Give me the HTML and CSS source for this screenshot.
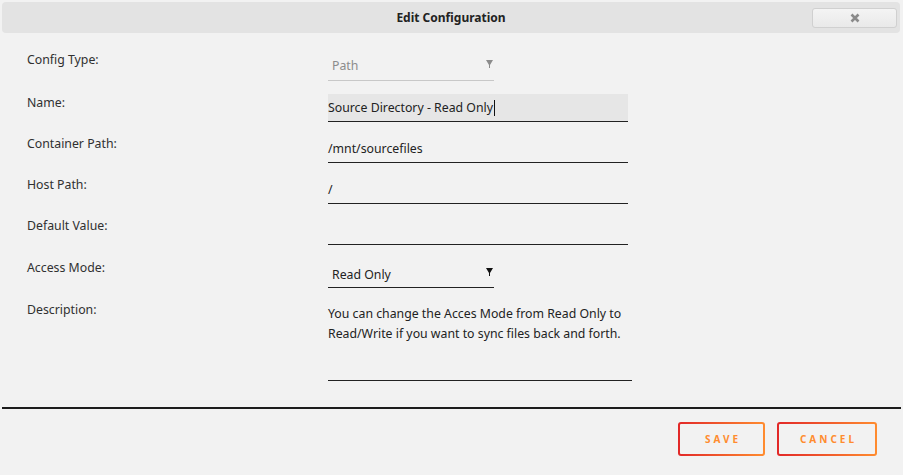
FILE: index.html
```html
<!DOCTYPE html>
<html lang="en">
<head>
    <meta charset="UTF-8">
    <meta name="viewport" content="width=device-width, initial-scale=1.0">
    <title>Edit Configuration</title>
    <link rel="stylesheet" href="styles.css">
</head>
<body>
    <div class="dialog">
        <!-- title bar -->
        <div class="titlebar">
            <span class="title">Edit Configuration</span>
            <button class="close-btn" title="Close">
                <svg width="10" height="10" viewBox="0 0 10 10"><path d="M1.5 1.5 L8.5 8.5 M8.5 1.5 L1.5 8.5" stroke="#8a8a8a" stroke-width="2.6" stroke-linecap="butt"/></svg>
            </button>
        </div>

        <!-- form -->
        <div class="form">
            <div class="row first">
                <label>Config Type:</label>
                <div class="select disabled">
                    <span>Path</span>
                    <svg class="caret" width="7" height="8" viewBox="0 0 7 8"><path d="M0 0 H7 L4 5 V8 H3 V5 Z" fill="#8c8c8c"/></svg>
                </div>
            </div>
            <div class="row">
                <label>Name:</label>
                <div class="input focused">Source Directory - Read Only<span class="cursor"></span></div>
            </div>
            <div class="row">
                <label>Container Path:</label>
                <div class="input">/mnt/sourcefiles</div>
            </div>
            <div class="row">
                <label>Host Path:</label>
                <div class="input">/</div>
            </div>
            <div class="row">
                <label>Default Value:</label>
                <div class="input"></div>
            </div>
            <div class="row access">
                <label>Access Mode:</label>
                <div class="select">
                    <span>Read Only</span>
                    <svg class="caret" width="7" height="8" viewBox="0 0 7 8"><path d="M0 0 H7 L4 5 V8 H3 V5 Z" fill="#111"/></svg>
                </div>
            </div>
            <div class="row desc">
                <label>Description:</label>
                <div class="textarea">You can change the Acces Mode from Read Only to Read/Write if you want to sync files back and forth.</div>
            </div>
        </div>

        <hr class="divider">

        <!-- buttons -->
        <div class="actions">
            <button class="btn save">SAVE</button>
            <button class="btn cancel">CANCEL</button>
        </div>
    </div>
</body>
</html>
```

FILE: styles.css
```css
/* dialog */
body {
    margin: 0;
    background: #f2f2f2;
    font-family: 'Noto Sans', 'Open Sans', Arial, sans-serif;
    font-size: 12.3px;
    color: #303030;
}
.dialog {
    padding: 2px;
}
.titlebar {
    height: 31px;
    margin-right: 1px;
    background: #e3e3e3;
    border-radius: 4px;
    display: flex;
    align-items: center;
    justify-content: center;
    position: relative;
}
.title {
    font-weight: bold;
    color: #222;
    font-size: 12px;
}
.close-btn {
    position: absolute;
    right: 3px;
    top: 6px;
    width: 85px;
    height: 20px;
    border: 1px solid #d0d0d0;
    border-radius: 3px;
    background: linear-gradient(#f4f4f4, #e9e9e9);
    display: flex;
    align-items: center;
    justify-content: center;
    padding: 0;
}
.form {
    padding: 21px 0 0 25px;
}
.row {
    display: grid;
    grid-template-columns: 301px 300px;
    margin-bottom: 13px;
}
.row label {
    padding-top: 1px;
    line-height: 16px;
}
.row.first label {
    margin-top: -3px;
}
.row.access {
    margin-top: 16px;
}
.row.access label {
    margin-top: -2px;
}
.input, .select {
    height: 27px;
    line-height: 27px;
    border-bottom: 1px solid #222;
    color: #222;
    white-space: nowrap;
}
.input.focused {
    background: #e6e6e6;
}
.cursor {
    display: inline-block;
    width: 1px;
    height: 16px;
    background: #111;
    vertical-align: -4px;
    margin-left: 1px;
}
.select {
    width: 166px;
    display: flex;
    align-items: center;
    justify-content: space-between;
    padding-left: 4px;
    padding-right: 1px;
    box-sizing: border-box;
}
.select.disabled {
    color: #8c8c8c;
    border-bottom-color: #c8c8c8;
    align-items: flex-start;
    line-height: 24px;
}
.select.disabled .caret {
    margin-top: 6px;
}
.caret {
    margin-top: -4px;
}
.row.desc {
    grid-template-columns: 301px 304px;
}
.textarea {
    height: 76px;
    padding-top: 3px;
    line-height: 20px;
    border-bottom: 1px solid #222;
    color: #222;
}
.divider {
    margin: 26px 0 0 0;
    border: 0;
    border-top: 2px solid #1c1c1c;
}
.actions {
    display: flex;
    justify-content: flex-end;
    gap: 12px;
    padding: 13px 24px 0 0;
}
.btn {
    height: 34px;
    border: 2px solid transparent;
    border-radius: 3px;
    background: linear-gradient(#f2f2f2, #f2f2f2) padding-box,
                linear-gradient(90deg, #e22828, #ff8c2f) border-box;
    color: #ff8c2f;
    font-family: 'Noto Sans', 'Open Sans', Arial, sans-serif;
    font-weight: bold;
    font-size: 10px;
    letter-spacing: 3px;
    padding: 0 0 0 3px;
    cursor: pointer;
}
.btn.save {
    width: 87px;
}
.btn.cancel {
    width: 100px;
}
```
